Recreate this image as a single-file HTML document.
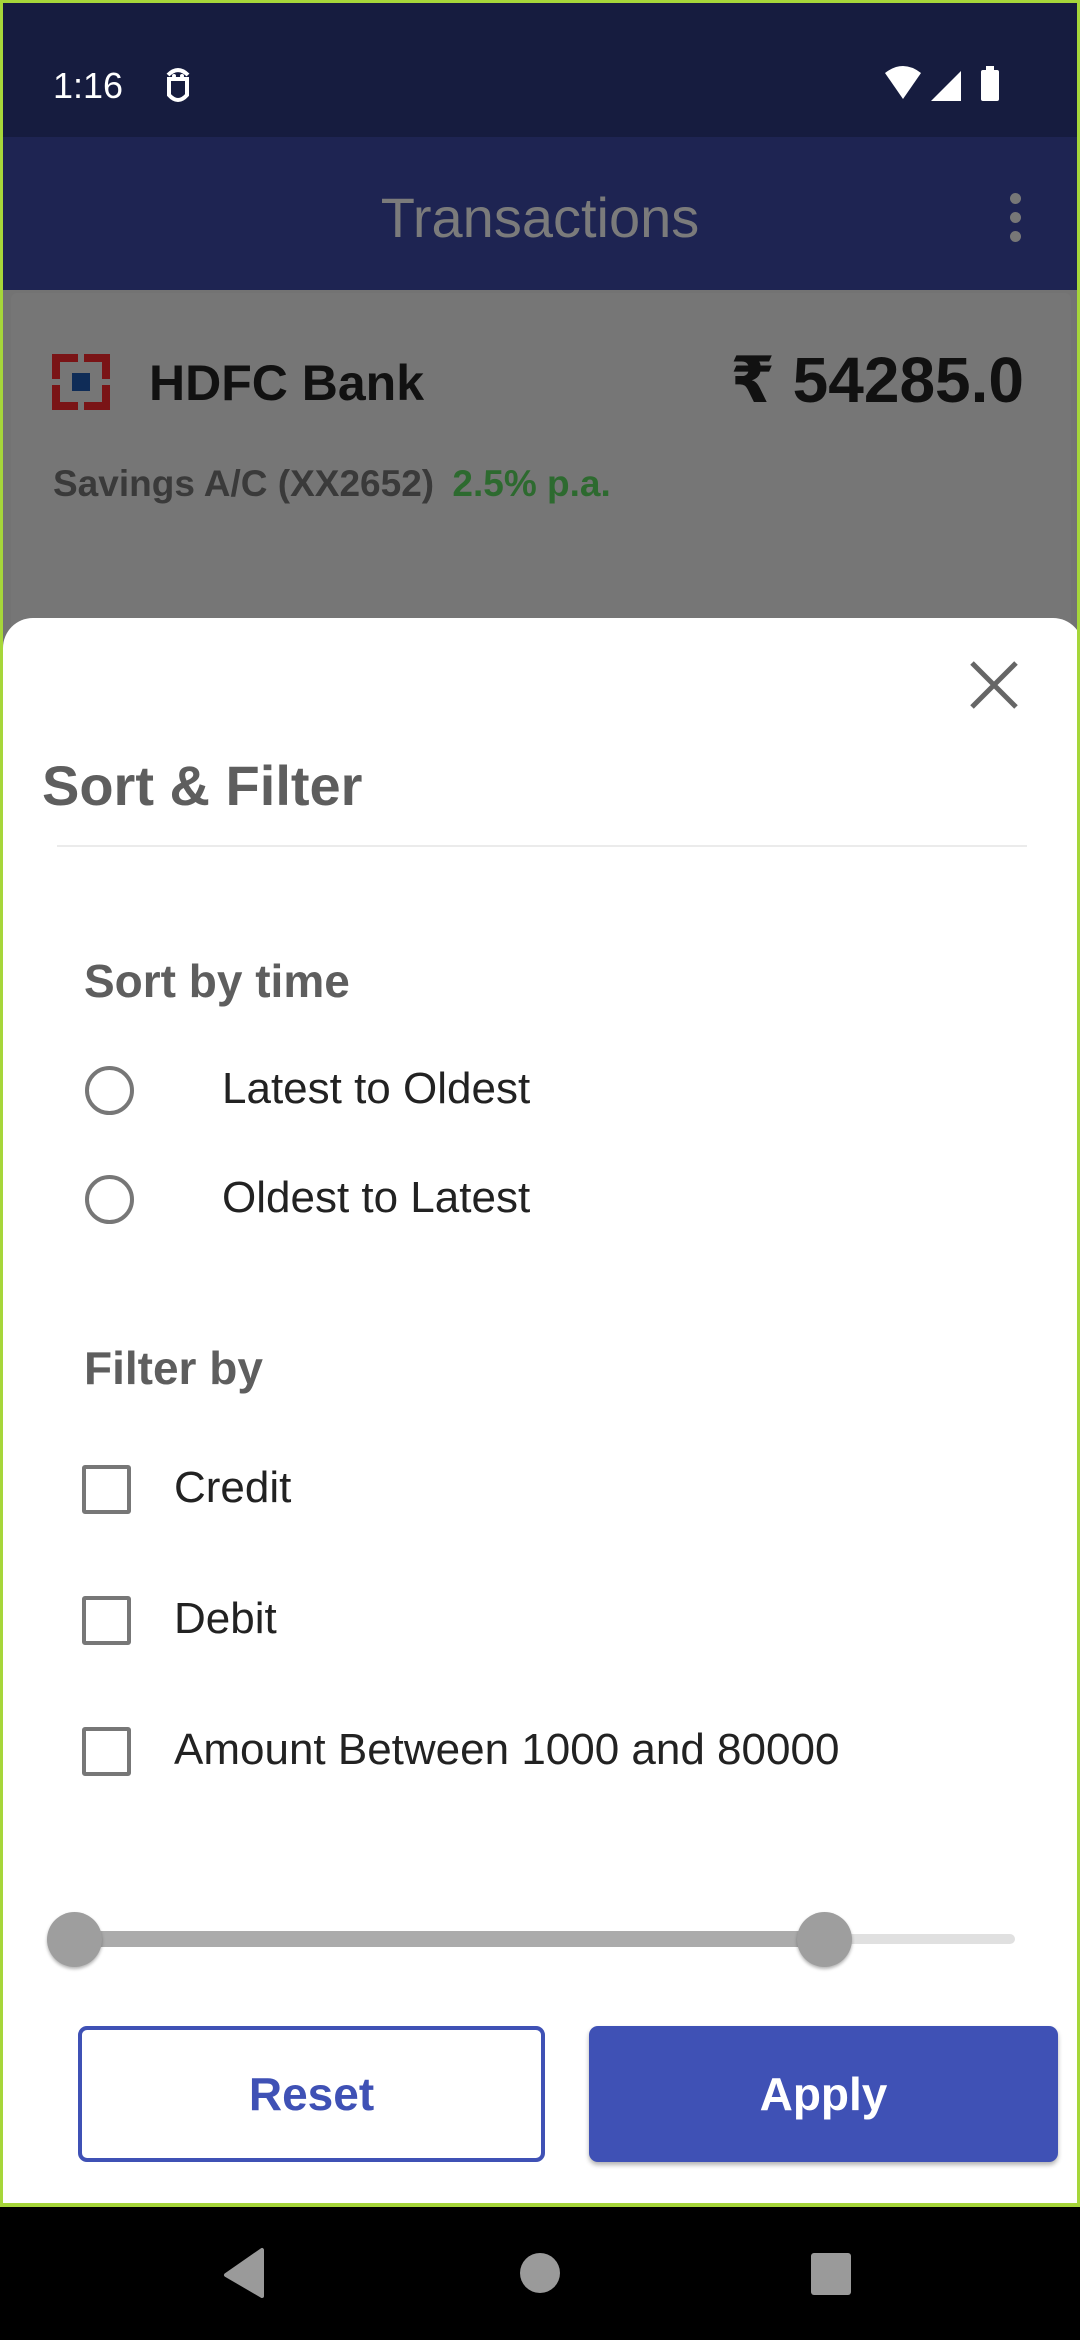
<!DOCTYPE html>
<html><head><meta charset="utf-8"><style>
*{margin:0;padding:0;box-sizing:border-box}
body{width:1080px;height:2340px;position:relative;overflow:hidden;font-family:"Liberation Sans",Roboto,sans-serif;background:#000}
.frame{position:absolute;left:0;top:0;width:1080px;height:2207px;border:3px solid #a6d63a;border-bottom-width:4px;overflow:hidden;background:#737373}
.abs{position:absolute}
</style></head><body>
<div class="frame">
  <div class="abs" style="left:0;top:0;width:1080px;height:134px;background:#161c3f"></div>
  <div class="abs" style="left:50px;top:62px;color:#fff;font-size:36px">1:16</div>
  <svg class="abs" style="left:160px;top:64px" width="30" height="40" viewBox="0 0 30 40"><path d="M5 8 Q15 -2 25 8 M4 12 H26 M6 12 V28 Q15 38 24 28 V12" fill="none" stroke="#fff" stroke-width="4"/><circle cx="11" cy="9" r="2" fill="#fff"/><circle cx="19" cy="9" r="2" fill="#fff"/></svg>
  <svg class="abs" style="left:880px;top:62px" width="130" height="40" viewBox="0 0 130 40"><path d="M2 8 Q20 -6 38 8 L20 34 Z" fill="#fff"/><path d="M48 36 L78 6 V36 Z" fill="#fff"/><rect x="98" y="5" width="18" height="31" rx="2" fill="#fff"/><rect x="103" y="1" width="8" height="5" fill="#fff"/></svg>
  <div class="abs" style="left:0;top:134px;width:1080px;height:153px;background:#1e2452"></div>
  <div class="abs" style="left:0;top:182px;width:1074px;text-align:center;color:#7b7b7b;font-size:56px">Transactions</div>
  <div class="abs" style="left:1007px;top:190px;width:11px;height:11px;border-radius:50%;background:#777"></div>
  <div class="abs" style="left:1007px;top:209px;width:11px;height:11px;border-radius:50%;background:#777"></div>
  <div class="abs" style="left:1007px;top:228px;width:11px;height:11px;border-radius:50%;background:#777"></div>
  <div class="abs" style="left:8px;top:290px;width:1060px;height:400px;background:#767676;border-radius:6px"></div>
  <svg class="abs" style="left:49px;top:351px" width="58" height="56" viewBox="0 0 58 56"><rect width="58" height="56" fill="#7a1416"/><rect x="8" y="8" width="42" height="40" fill="#767676"/><rect x="26" y="0" width="6" height="56" fill="#767676"/><rect x="0" y="25" width="58" height="6" fill="#767676"/><rect x="20" y="19" width="18" height="18" fill="#0f2c57"/></svg>
  <div class="abs" style="left:146px;top:351px;font-size:50px;font-weight:bold;color:#111">HDFC Bank</div>
  <div class="abs" style="right:53px;top:340px;font-size:64px;font-weight:bold;color:#111;font-family:'Liberation Sans','DejaVu Sans',sans-serif">₹ 54285.0</div>
  <div class="abs" style="left:50px;top:460px;font-size:37px;font-weight:bold;color:#3a3a3a">Savings A/C (XX2652) <span style="color:#2d6a2f;margin-left:8px">2.5% p.a.</span></div>

  <div class="abs" style="left:0;top:615px;width:1080px;height:1700px;background:#fff;border-radius:30px 30px 0 0"></div>
  <svg class="abs" style="left:965px;top:656px" width="52" height="52" viewBox="0 0 52 52"><path d="M4 4 L48 48 M48 4 L4 48" stroke="#666" stroke-width="5"/></svg>
  <div class="abs" style="left:39px;top:750px;font-size:56px;font-weight:bold;color:#5e5e5e">Sort &amp; Filter</div>
  <div class="abs" style="left:54px;top:842px;width:970px;height:2px;background:#ebebeb"></div>
  <div class="abs" style="left:81px;top:951px;font-size:46px;font-weight:bold;color:#5e5e5e">Sort by time</div>
  <div class="abs" style="left:82px;top:1063px;width:49px;height:49px;border-radius:50%;border:4px solid #777"></div>
  <div class="abs" style="left:219px;top:1061px;font-size:44px;color:#222">Latest to Oldest</div>
  <div class="abs" style="left:82px;top:1172px;width:49px;height:49px;border-radius:50%;border:4px solid #777"></div>
  <div class="abs" style="left:219px;top:1170px;font-size:44px;color:#222">Oldest to Latest</div>
  <div class="abs" style="left:81px;top:1338px;font-size:46px;font-weight:bold;color:#5e5e5e">Filter by</div>
  <div class="abs" style="left:79px;top:1462px;width:49px;height:49px;border:4px solid #777;border-radius:3px"></div>
  <div class="abs" style="left:171px;top:1460px;font-size:44px;color:#222">Credit</div>
  <div class="abs" style="left:79px;top:1593px;width:49px;height:49px;border:4px solid #777;border-radius:3px"></div>
  <div class="abs" style="left:171px;top:1591px;font-size:44px;color:#222">Debit</div>
  <div class="abs" style="left:79px;top:1724px;width:49px;height:49px;border:4px solid #777;border-radius:3px"></div>
  <div class="abs" style="left:171px;top:1722px;font-size:44px;color:#222">Amount Between 1000 and 80000</div>

  <div class="abs" style="left:72px;top:1931px;width:940px;height:10px;border-radius:5px;background:#e0e0e0"></div>
  <div class="abs" style="left:72px;top:1928px;width:750px;height:16px;background:#ababab"></div>
  <div class="abs" style="left:44px;top:1909px;width:55px;height:55px;border-radius:50%;background:#9e9e9e;box-shadow:0 2px 3px rgba(0,0,0,.3)"></div>
  <div class="abs" style="left:794px;top:1909px;width:55px;height:55px;border-radius:50%;background:#9e9e9e;box-shadow:0 2px 3px rgba(0,0,0,.3)"></div>

  <div class="abs" style="left:75px;top:2023px;width:467px;height:136px;border:4px solid #3f51b5;border-radius:9px;color:#3f51b5;font-size:46px;font-weight:bold;text-align:center;line-height:128px">Reset</div>
  <div class="abs" style="left:586px;top:2023px;width:469px;height:136px;background:#3f51b5;border-radius:9px;color:#fff;font-size:46px;font-weight:bold;text-align:center;line-height:136px;box-shadow:0 3px 5px rgba(0,0,0,.3)">Apply</div>
</div>
<svg class="abs" style="left:0;top:2207px" width="1080" height="133" viewBox="0 0 1080 133"><path d="M262 43 V89 L226 68 Z" fill="#9a9a9a" stroke="#9a9a9a" stroke-width="4" stroke-linejoin="round"/><circle cx="540" cy="66" r="20" fill="#9a9a9a"/><rect x="811" y="46" width="40" height="42" rx="3" fill="#9a9a9a"/></svg>
</body></html>
